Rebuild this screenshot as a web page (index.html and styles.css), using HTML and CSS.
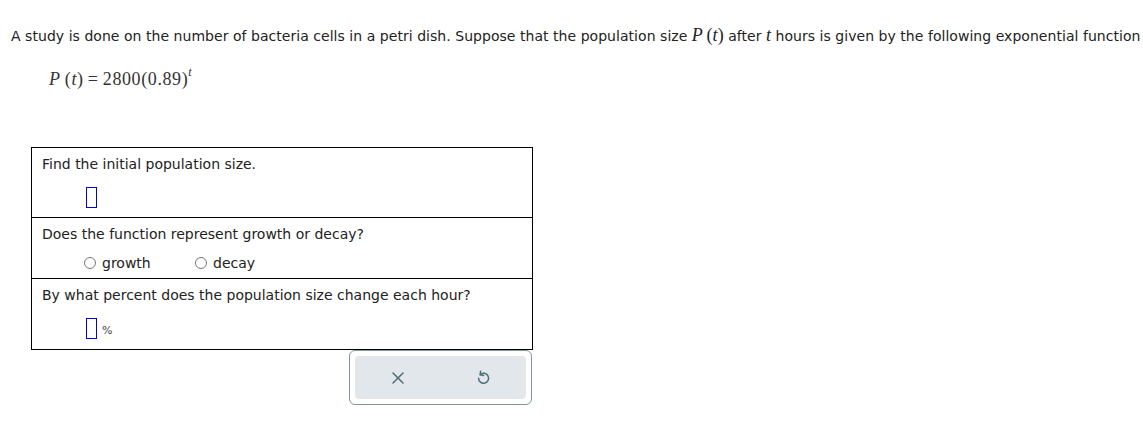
FILE: index.html
```html
<!DOCTYPE html>
<html>
<head>
<meta charset="utf-8">
<link rel="stylesheet" href="styles.css">
</head>
<body>
<div class="page">
  <p class="intro">A study is done on the number of bacteria cells in a petri dish. Suppose that the population size <span class="m"><i>P</i>&#8201;(<i>t</i>)</span> after <span class="m"><i>t</i></span> hours is given by the following exponential function</p>
  <div class="formula"><i>P</i>&#8201;(<i>t</i>)&#8201;=&#8201;2800(0.89)<sup><i>t</i></sup></div>
  <div class="box">
    <div class="part">
      <div class="q">Find the initial population size.</div>
      <div class="ans"><span class="input"></span></div>
    </div>
    <div class="part">
      <div class="q">Does the function represent growth or decay?</div>
      <div class="radios">
        <label class="opt"><span class="radio"></span>growth</label>
        <label class="opt"><span class="radio"></span>decay</label>
      </div>
    </div>
    <div class="part last">
      <div class="q">By what percent does the population size change each hour?</div>
      <div class="ans"><span class="input"></span><span class="pct">%</span></div>
    </div>
  </div>
  <div class="tools">
    <div class="tools-inner">
      <svg class="ic" width="14" height="14" viewBox="0 0 14 14"><path d="M2 2 L12 12 M12 2 L2 12" stroke="#4f6b78" stroke-width="1.5" fill="none" stroke-linecap="round"/></svg>
      <svg class="ic" width="14" height="16" viewBox="0 0 14 16"><path d="M4.2 4.6 A5 5 0 1 1 2.6 8.2" stroke="#4f6b78" stroke-width="1.5" fill="none" stroke-linecap="round"/><path d="M4.6 1.2 L4.2 4.8 L7.6 5.4" stroke="#4f6b78" stroke-width="1.5" fill="none" stroke-linecap="round" stroke-linejoin="round"/></svg>
    </div>
  </div>
</div>
</body>
</html>
```
FILE: styles.css
```css
html, body { margin: 0; padding: 0; background: #fff; }
body { font-family: "DejaVu Sans", Verdana, sans-serif; font-size: 14px; color: #222; }
.page { padding: 0 0 0 11px; }
.intro { margin: 0; padding-top: 26px; line-height: 18px; white-space: nowrap; color: #222; letter-spacing: 0.04px; }
.m { font-family: "Liberation Serif", "Times New Roman", serif; font-size: 18px; }
.formula { font-family: "Liberation Serif", "Times New Roman", serif; font-size: 18px; margin: 24px 0 0 38px; color: #333; line-height: 20px; letter-spacing: 0.6px; }
.formula sup { font-size: 12px; vertical-align: 9px; line-height: 0; }
.box { margin: 58px 0 0 20px; width: 500px; border: 1px solid #000; }
.part { border-top: 1px solid #000; padding: 9px 10px 0 10px; }
.part:first-child { border-top: none; }
.q { line-height: 14px; }
.ans { display: flex; align-items: center; padding: 16px 0 9px 44px; height: 21px; box-sizing: content-box; }
.last .ans { padding-bottom: 10px; }
.input { display: inline-block; width: 9px; height: 19px; border: 1px solid #0000ee; }
.pct { font-size: 11px; color: #444; margin-left: 5px; margin-top: 4px; }
.radios { display: flex; padding: 15px 0 8px 42px; gap: 0; }
.opt { display: flex; align-items: center; width: 111px; line-height: 14px; }
.radio { display: inline-block; width: 12px; height: 12px; border: 1px solid #767676; border-radius: 50%; margin-right: 6px; box-sizing: border-box; }
.tools { margin: 0 0 0 338px; width: 183px; height: 55px; box-sizing: border-box; border: 1px solid #7f97a3; border-radius: 6px; padding: 5px; }
.tools-inner { height: 100%; background: #e1e7ea; border-radius: 4px; display: flex; align-items: center; justify-content: space-around; }
.ic { display: block; }
```
